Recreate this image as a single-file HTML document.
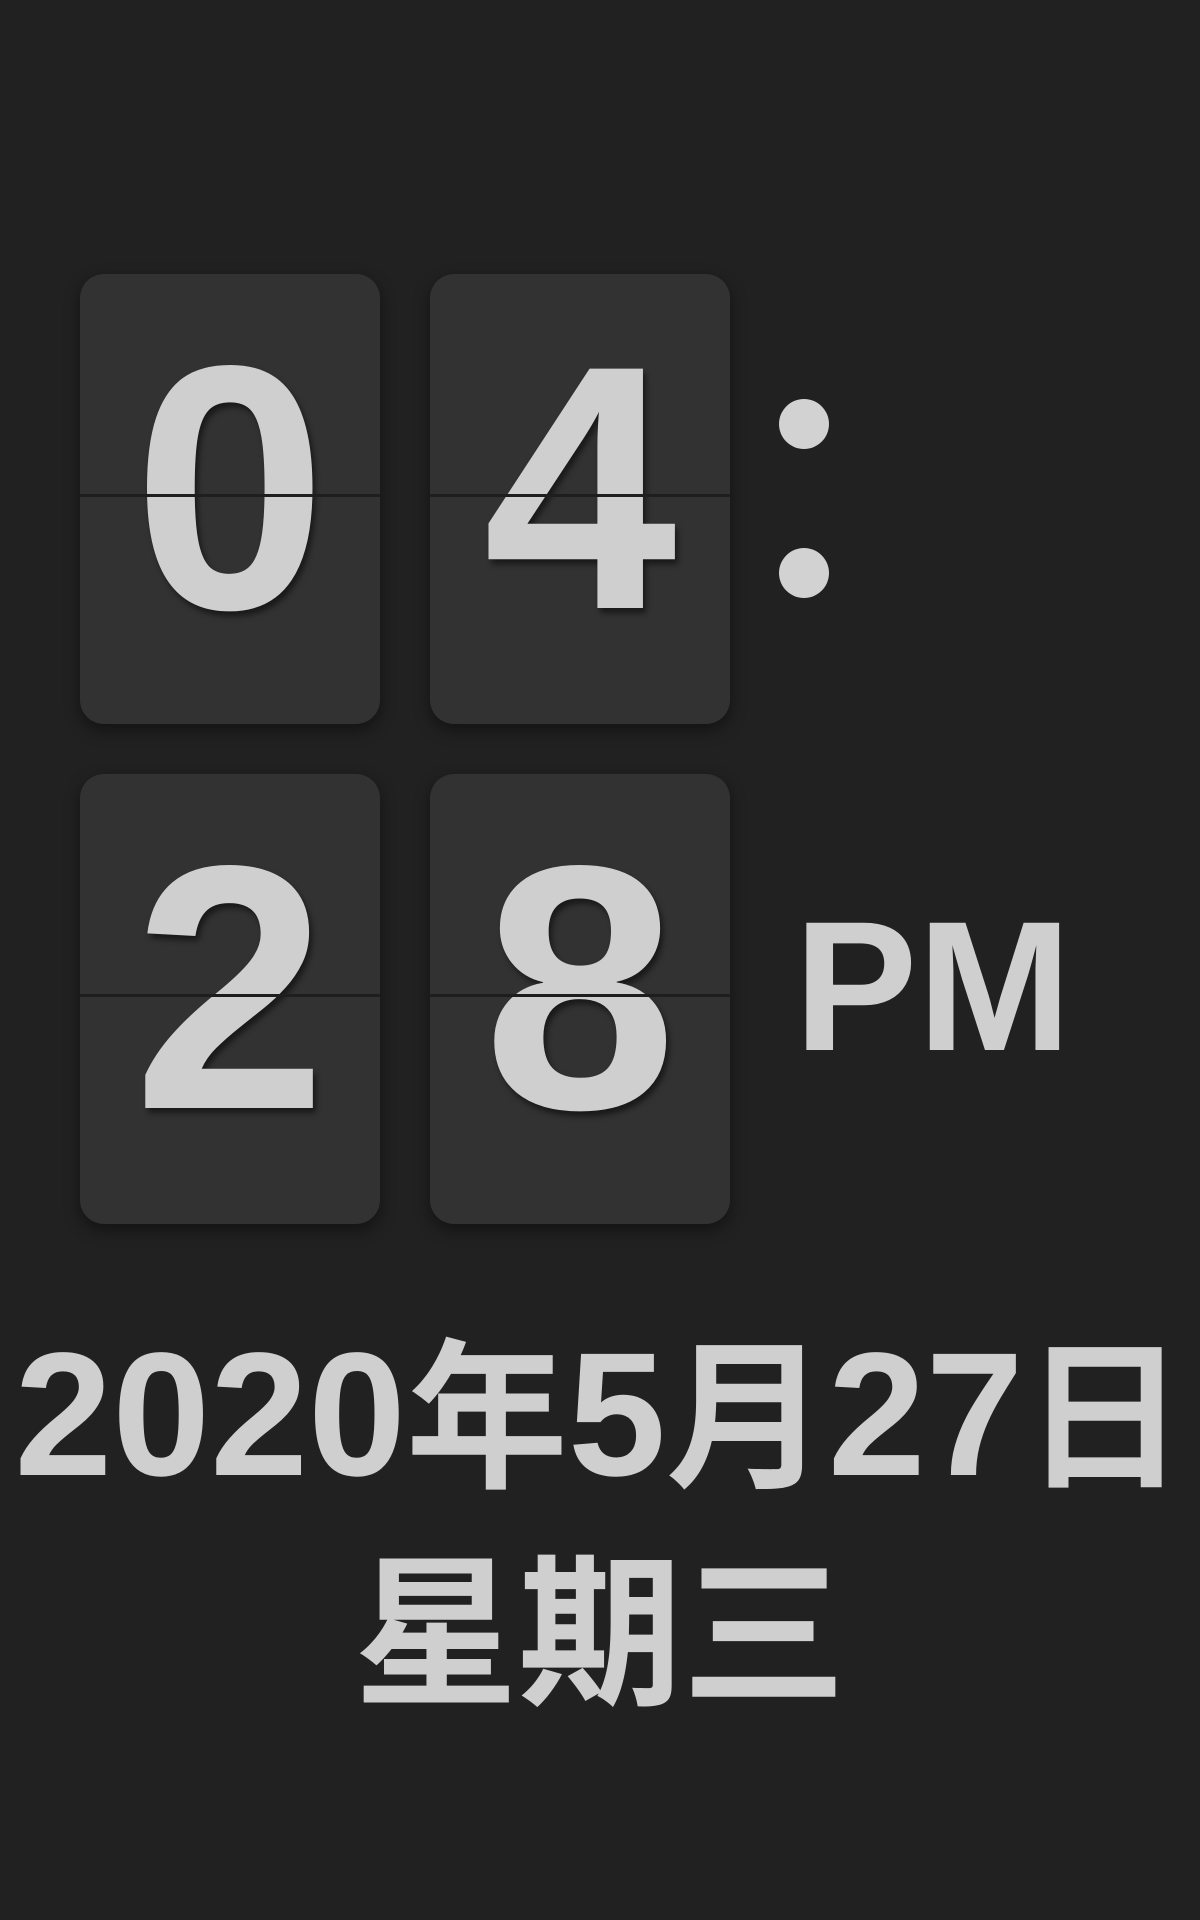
<!DOCTYPE html>
<html><head><meta charset="utf-8"><style>
html,body{margin:0;padding:0;background:#212121;width:1200px;height:1920px;overflow:hidden;}
.card{position:absolute;width:300px;height:450px;background:#323232;border-radius:24px;box-shadow:0 6px 16px rgba(0,0,0,.45);overflow:hidden;}
.card .d{position:absolute;left:0;right:0;top:-11px;height:450px;line-height:450px;text-align:center;font-family:"Liberation Sans",sans-serif;font-weight:bold;font-size:348px;color:#cfcfcf;text-shadow:3px 5px 6px rgba(0,0,0,.5);}
.card .ln{position:absolute;left:0;right:0;top:220px;height:3px;background:#1e1e1e;}
.dot{position:absolute;width:50px;height:50px;border-radius:50%;background:#d2d2d2;}
.pm{position:absolute;left:794px;top:895px;font-family:"Liberation Sans",sans-serif;font-weight:bold;font-size:185px;color:#cfcfcf;line-height:185px;}
.t{position:absolute;left:0;width:1200px;text-align:center;color:#cfcfcf;font-family:"Liberation Sans","Noto Sans CJK SC",sans-serif;font-weight:bold;white-space:nowrap;}
.t .n{font-size:176px;}
</style></head><body>
<div class="card" style="left:80px;top:274px"><div class="d">0</div><div class="ln"></div></div>
<div class="card" style="left:430px;top:274px"><div class="d">4</div><div class="ln"></div></div>
<div class="card" style="left:80px;top:774px"><div class="d">2</div><div class="ln"></div></div>
<div class="card" style="left:430px;top:774px"><div class="d">8</div><div class="ln"></div></div>
<div class="dot" style="left:779px;top:399px"></div>
<div class="dot" style="left:779px;top:548px"></div>
<div class="pm">PM</div>
<div class="t" style="top:1315px;font-size:162px;line-height:200px;"><span class="n">2020</span>年<span class="n">5</span>月<span class="n">27</span>日</div>
<div class="t" style="top:1536px;font-size:164px;line-height:200px">星期三</div>
</body></html>
